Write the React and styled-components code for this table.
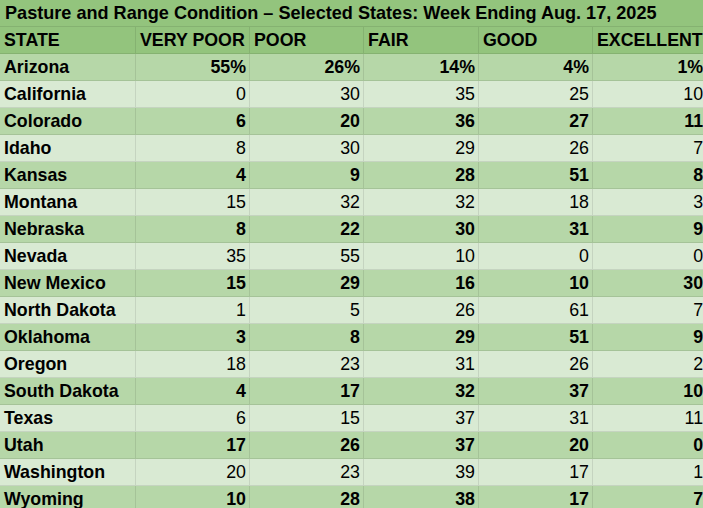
import React from "react";
import styled, { createGlobalStyle } from "styled-components";

const GlobalStyle = createGlobalStyle`
  html, body {
    margin: 0;
    padding: 0;
    background: #ffffff;
    overflow: hidden;
  }
  body {
    font-family: "Liberation Sans", Arial, sans-serif;
  }
`;

const Viewport = styled.div`
  width: 703px;
  height: 508px;
  overflow: hidden;
`;

const Table = styled.table`
  border-collapse: separate;
  border-spacing: 0;
  table-layout: fixed;
  width: 707px;
  font-family: "Liberation Sans", Arial, sans-serif;
  font-size: 17.8px;
  color: #000;
`;

const Col = styled.col`
  width: ${(p) => p.$w}px;
`;

const Row = styled.tr`
  background: ${(p) =>
    p.$tone === "head" ? "#93c47d" : p.$tone === "dark" ? "#b6d7a8" : "#d9ead3"};
`;

const TitleCell = styled.th`
  height: 26px;
  padding: 0 4px 0 5px;
  text-align: left;
  font-weight: 700;
  font-size: 18.1px;
  line-height: 26px;
  white-space: nowrap;
  overflow: hidden;
  border-bottom: 1px solid rgba(0, 0, 0, 0.09);
  vertical-align: middle;
`;

const HeadCell = styled.th`
  height: 26px;
  padding: 0 3px 0 4px;
  text-align: left;
  font-weight: 700;
  line-height: 26px;
  white-space: nowrap;
  overflow: hidden;
  border-bottom: 1px solid rgba(0, 0, 0, 0.09);
  border-right: 1px solid rgba(0, 0, 0, 0.09);
  vertical-align: middle;
`;

const StateCell = styled.td`
  height: 26px;
  padding: 0 3px 0 4px;
  text-align: left;
  font-weight: 700;
  line-height: 26px;
  white-space: nowrap;
  overflow: hidden;
  border-bottom: 1px solid rgba(0, 0, 0, 0.09);
  border-right: 1px solid rgba(0, 0, 0, 0.09);
  vertical-align: middle;
`;

const NumCell = styled.td`
  height: 26px;
  padding: 0 3px 0 4px;
  text-align: right;
  font-weight: ${(p) => (p.$bold ? 700 : 400)};
  line-height: 26px;
  white-space: nowrap;
  overflow: hidden;
  border-bottom: 1px solid rgba(0, 0, 0, 0.09);
  border-right: 1px solid rgba(0, 0, 0, 0.09);
  vertical-align: middle;
`;

const columns = ["STATE", "VERY POOR", "POOR", "FAIR", "GOOD", "EXCELLENT"];
const widths = [136, 114, 114, 115, 114, 114];

const rows = [
  ["Arizona", "55%", "26%", "14%", "4%", "1%"],
  ["California", "0", "30", "35", "25", "10"],
  ["Colorado", "6", "20", "36", "27", "11"],
  ["Idaho", "8", "30", "29", "26", "7"],
  ["Kansas", "4", "9", "28", "51", "8"],
  ["Montana", "15", "32", "32", "18", "3"],
  ["Nebraska", "8", "22", "30", "31", "9"],
  ["Nevada", "35", "55", "10", "0", "0"],
  ["New Mexico", "15", "29", "16", "10", "30"],
  ["North Dakota", "1", "5", "26", "61", "7"],
  ["Oklahoma", "3", "8", "29", "51", "9"],
  ["Oregon", "18", "23", "31", "26", "2"],
  ["South Dakota", "4", "17", "32", "37", "10"],
  ["Texas", "6", "15", "37", "31", "11"],
  ["Utah", "17", "26", "37", "20", "0"],
  ["Washington", "20", "23", "39", "17", "1"],
  ["Wyoming", "10", "28", "38", "17", "7"],
];

export default function App() {
  return (
    <>
      <GlobalStyle />
      <Viewport>
        <Table>
          <colgroup>
            {widths.map((w, i) => (
              <Col key={i} $w={w} />
            ))}
          </colgroup>
          <thead>
            <Row $tone="head">
              <TitleCell colSpan={6}>
                Pasture and Range Condition – Selected States: Week Ending Aug. 17, 2025
              </TitleCell>
            </Row>
            <Row $tone="head">
              {columns.map((c) => (
                <HeadCell key={c}>{c}</HeadCell>
              ))}
            </Row>
          </thead>
          <tbody>
            {rows.map((r, i) => {
              const dark = i % 2 === 0;
              return (
                <Row key={r[0]} $tone={dark ? "dark" : "light"}>
                  <StateCell>{r[0]}</StateCell>
                  {r.slice(1).map((v, j) => (
                    <NumCell key={j} $bold={dark}>
                      {v}
                    </NumCell>
                  ))}
                </Row>
              );
            })}
          </tbody>
        </Table>
      </Viewport>
    </>
  );
}
